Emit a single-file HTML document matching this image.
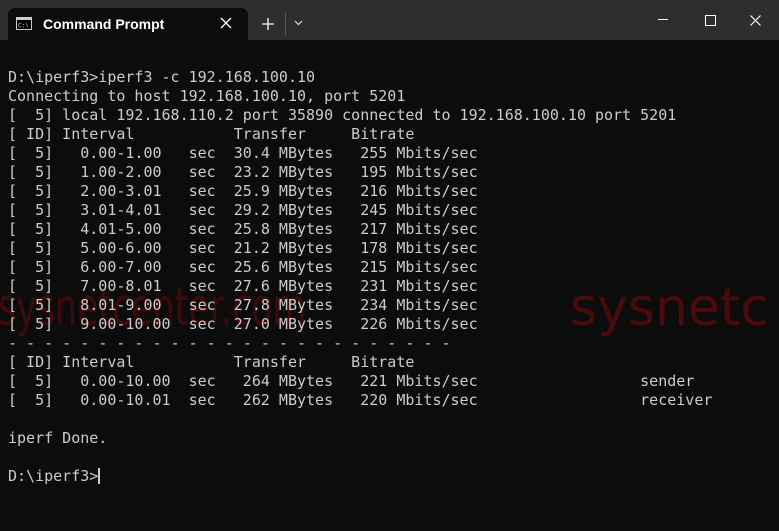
<!DOCTYPE html>
<html><head><style>
body{margin:0;width:779px;height:531px;background:#0c0c0c;overflow:hidden;position:relative;font-family:"Liberation Sans",sans-serif}
.bar{position:absolute;left:0;top:0;width:779px;height:40px;background:#2e2e2e}
.tab{position:absolute;left:8px;top:8px;width:240px;height:32px;background:#0c0c0c;border-radius:7px 7px 0 0}
.title{position:absolute;left:43px;top:16px;color:#fff;font-size:14px;font-weight:bold}
pre{position:absolute;left:8px;top:68px;margin:0;font-family:"DejaVu Sans Mono",monospace;font-size:15px;line-height:19px;color:#cccccc;z-index:2}
.wm{position:absolute;font-family:"DejaVu Sans","Liberation Sans",sans-serif;font-size:52px;color:rgba(120,10,10,0.6);top:278px;z-index:1;white-space:nowrap}
.cur{display:inline-block;width:2px;height:16px;background:#ccc;vertical-align:-3px}
</style></head><body>
<div class="bar"></div>
<div class="tab"></div>
<svg style="position:absolute;left:16px;top:17px" width="16" height="13"><rect x="0.5" y="0.5" width="15" height="12" fill="#000" stroke="#ccc"/><rect x="1" y="1" width="14" height="2" fill="#ccc"/><text x="2" y="10.5" font-size="6" fill="#ccc" font-family="Liberation Mono">C:\</text></svg>
<div class="title">Command Prompt</div>
<svg style="position:absolute;left:220px;top:17px" width="12" height="12"><path d="M1 1L11 11M11 1L1 11" stroke="#fff" stroke-width="1.3"/></svg>
<svg style="position:absolute;left:261px;top:17px" width="14" height="14"><path d="M7 1V13M1 7H13" stroke="#fff" stroke-width="1.3"/></svg>
<div style="position:absolute;left:285px;top:12px;width:1px;height:24px;background:#555"></div>
<svg style="position:absolute;left:294px;top:20px" width="9" height="6"><path d="M1 1L4.5 4.5L8 1" stroke="#ddd" stroke-width="1.2" fill="none"/></svg>
<svg style="position:absolute;left:658px;top:19px" width="10" height="2"><path d="M0 0.5H10" stroke="#fff"/></svg>
<svg style="position:absolute;left:705px;top:15px" width="11" height="11"><rect x="0.5" y="0.5" width="10" height="10" fill="none" stroke="#fff"/></svg>
<svg style="position:absolute;left:750px;top:15px" width="11" height="11"><path d="M0.5 0.5L10.5 10.5M10.5 0.5L0.5 10.5" stroke="#fff" stroke-width="1.2"/></svg>
<div class="wm" style="left:-2px;transform:scaleX(0.67);transform-origin:0 0;color:rgba(110,10,10,0.5)">sysnetcenter.com</div>
<div class="wm" style="left:570px">sysnetc</div>
<pre>D:\iperf3>iperf3 -c 192.168.100.10
Connecting to host 192.168.100.10, port 5201
[  5] local 192.168.110.2 port 35890 connected to 192.168.100.10 port 5201
[ ID] Interval           Transfer     Bitrate
[  5]   0.00-1.00   sec  30.4 MBytes   255 Mbits/sec
[  5]   1.00-2.00   sec  23.2 MBytes   195 Mbits/sec
[  5]   2.00-3.01   sec  25.9 MBytes   216 Mbits/sec
[  5]   3.01-4.01   sec  29.2 MBytes   245 Mbits/sec
[  5]   4.01-5.00   sec  25.8 MBytes   217 Mbits/sec
[  5]   5.00-6.00   sec  21.2 MBytes   178 Mbits/sec
[  5]   6.00-7.00   sec  25.6 MBytes   215 Mbits/sec
[  5]   7.00-8.01   sec  27.6 MBytes   231 Mbits/sec
[  5]   8.01-9.00   sec  27.8 MBytes   234 Mbits/sec
[  5]   9.00-10.00  sec  27.0 MBytes   226 Mbits/sec
- - - - - - - - - - - - - - - - - - - - - - - - -
[ ID] Interval           Transfer     Bitrate
[  5]   0.00-10.00  sec   264 MBytes   221 Mbits/sec                  sender
[  5]   0.00-10.01  sec   262 MBytes   220 Mbits/sec                  receiver

iperf Done.

D:\iperf3><span class="cur"></span></pre>
</body></html>
